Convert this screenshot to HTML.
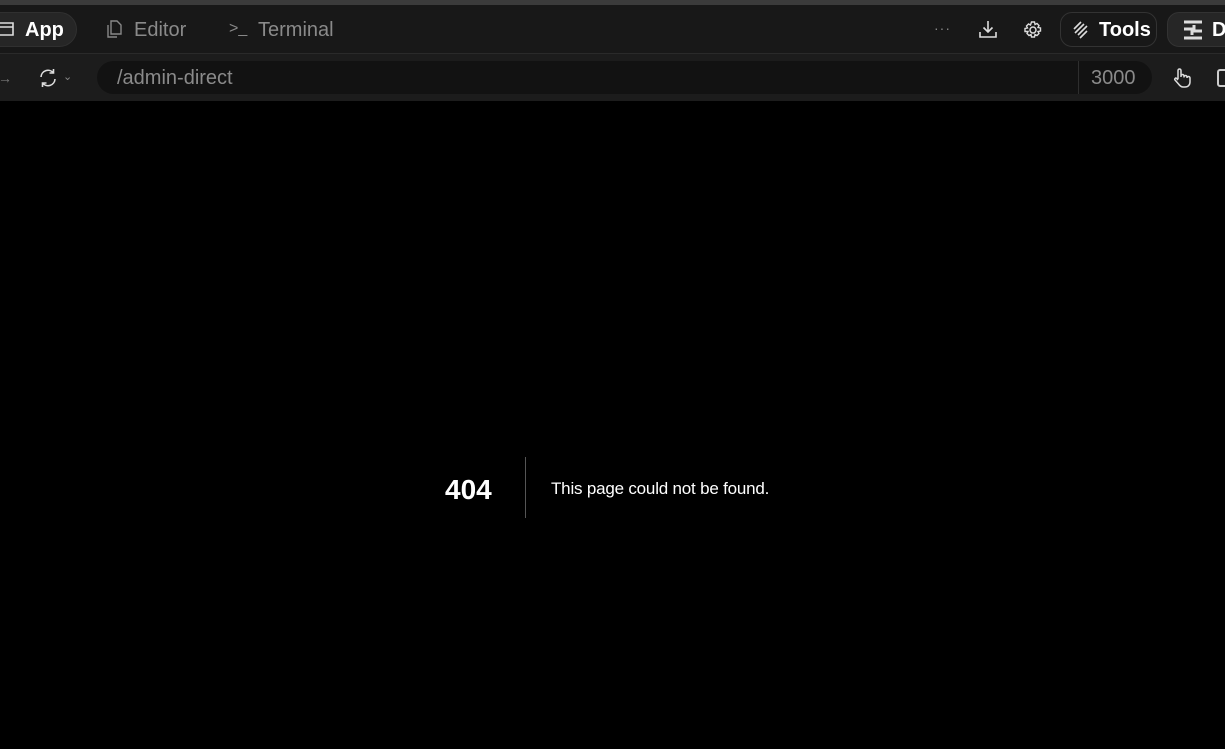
<!DOCTYPE html>
<html><head><style>
*{margin:0;padding:0;box-sizing:border-box}
body{width:1225px;height:749px;overflow:hidden;background:#000;font-family:"Liberation Sans",sans-serif;position:relative}
.top{position:absolute;left:0;top:0;width:1225px;height:5px;background:#3b3b3b}
.bar1{position:absolute;left:0;top:5px;width:1225px;height:49px;background:#181818;border-bottom:1px solid #2a2a2a}
.bar2{position:absolute;left:0;top:54px;width:1225px;height:47px;background:#1c1c1c}
.abs{position:absolute}
.t{color:#8a8a8a;font-size:20px}
.pill{position:absolute;border:1px solid #333;border-radius:12px;background:#1f1f1f}
</style></head><body>
<div class="top"></div>
<div class="bar1"></div>
<div class="bar2"></div>
<div class="pill" style="left:-20px;top:12px;width:97px;height:35px;background:#262626;border-color:#303030;border-radius:18px"></div>
<svg class="abs" style="left:0;top:21px" width="14" height="16" viewBox="0 0 14 16"><path d="M-2 2h15v12h-15M-2 6h15" fill="none" stroke="#ddd" stroke-width="1.6"/></svg>
<div class="abs" style="left:25px;top:19px;color:#fff;font-size:20px;font-weight:bold">App</div>
<svg class="abs" style="left:105px;top:19px" width="18" height="20" viewBox="0 0 18 20"><path d="M6 2h6l4 4v9H6zM3 6v12h9" fill="none" stroke="#888" stroke-width="1.4"/></svg>
<div class="abs t" style="left:134px;top:19px">Editor</div>
<div class="abs" style="left:229px;top:20px;color:#888;font-size:16px">&gt;_</div>
<div class="abs t" style="left:258px;top:19px">Terminal</div>
<div class="abs" style="left:934px;top:20px;color:#888;font-size:14px;letter-spacing:1px">···</div>
<svg class="abs" style="left:978px;top:19px" width="20" height="20" viewBox="0 0 20 20"><path d="M10 2v11M5.5 8.5l4.5 4.5 4.5-4.5M2 13v5h16v-5" fill="none" stroke="#ddd" stroke-width="1.6"/></svg>
<svg class="abs" style="left:1023px;top:20px" width="20" height="20" viewBox="0 0 20 20"><circle cx="10" cy="10" r="3" fill="none" stroke="#ddd" stroke-width="1.5"/><path d="M8.5 2h3l.5 2.5 2-1 2 2-1 2 2.5.5v3l-2.5.5 1 2-2 2-2-1-.5 2.5h-3l-.5-2.5-2 1-2-2 1-2L2 11.5v-3l2.5-.5-1-2 2-2 2 1z" fill="none" stroke="#ddd" stroke-width="1.4"/></svg>
<div class="pill" style="left:1060px;top:12px;width:97px;height:35px;background:#181818"></div>
<svg class="abs" style="left:1071px;top:20px" width="20" height="20" viewBox="0 0 20 20"><path d="M3 9l7-7M4 13l9-9M7 15l9-9M9 18l7-7" fill="none" stroke="#ddd" stroke-width="1.6"/></svg>
<div class="abs" style="left:1099px;top:19px;color:#fff;font-size:20px;font-weight:bold">Tools</div>
<div class="pill" style="left:1167px;top:12px;width:80px;height:35px;background:#262626"></div>
<svg class="abs" style="left:1182px;top:20px" width="22" height="20" viewBox="0 0 22 20"><path d="M2 2h18M2 18h18M2 9h8v6M12 5v6h8" fill="none" stroke="#ddd" stroke-width="3"/></svg>
<div class="abs" style="left:1212px;top:19px;color:#fff;font-size:20px;font-weight:bold">D</div>
<div class="abs" style="left:-2px;top:70px;color:#777;font-size:14px">→</div>
<svg class="abs" style="left:38px;top:68px" width="20" height="20" viewBox="0 0 20 20"><path d="M3 9a7 7 0 0 1 12.5-4M17 11a7 7 0 0 1-12.5 4M15.5 1v4h-4M4.5 19v-4h4" fill="none" stroke="#ddd" stroke-width="1.6"/></svg>
<div class="abs" style="left:63px;top:70px;color:#888;font-size:11px">⌄</div>
<div class="abs" style="left:97px;top:61px;width:1055px;height:33px;border-radius:17px;background:#121212"></div>
<div class="abs" style="left:1078px;top:61px;width:1px;height:33px;background:#2e2e2e"></div>
<div class="abs t" style="left:117px;top:67px">/admin-direct</div>
<div class="abs t" style="left:1091px;top:67px">3000</div>
<svg class="abs" style="left:1171px;top:67px" width="22" height="22" viewBox="0 0 22 22"><path d="M7 12V3.5a1.5 1.5 0 0 1 3 0V10M10 9a1.5 1.5 0 0 1 3 0v1.5M13 10a1.5 1.5 0 0 1 3 0v1M16 11a1.5 1.5 0 0 1 3 0v4c0 3-2 5-5 5h-2c-2 0-3-1-4.5-3L4 13c-.8-1 .5-2.5 1.6-1.6L7 13" fill="none" stroke="#ddd" stroke-width="1.5"/></svg>
<div class="abs" style="left:1217px;top:69px;width:12px;height:18px;border:2px solid #ccc;border-radius:3px"></div>
<div class="abs" style="left:445px;top:474px;color:#fff;font-size:28px;font-weight:bold">404</div>
<div class="abs" style="left:525px;top:457px;width:1px;height:61px;background:#555"></div>
<div class="abs" style="left:551px;top:479px;color:#fff;font-size:17px;letter-spacing:-0.2px">This page could not be found.</div>
</body></html>
